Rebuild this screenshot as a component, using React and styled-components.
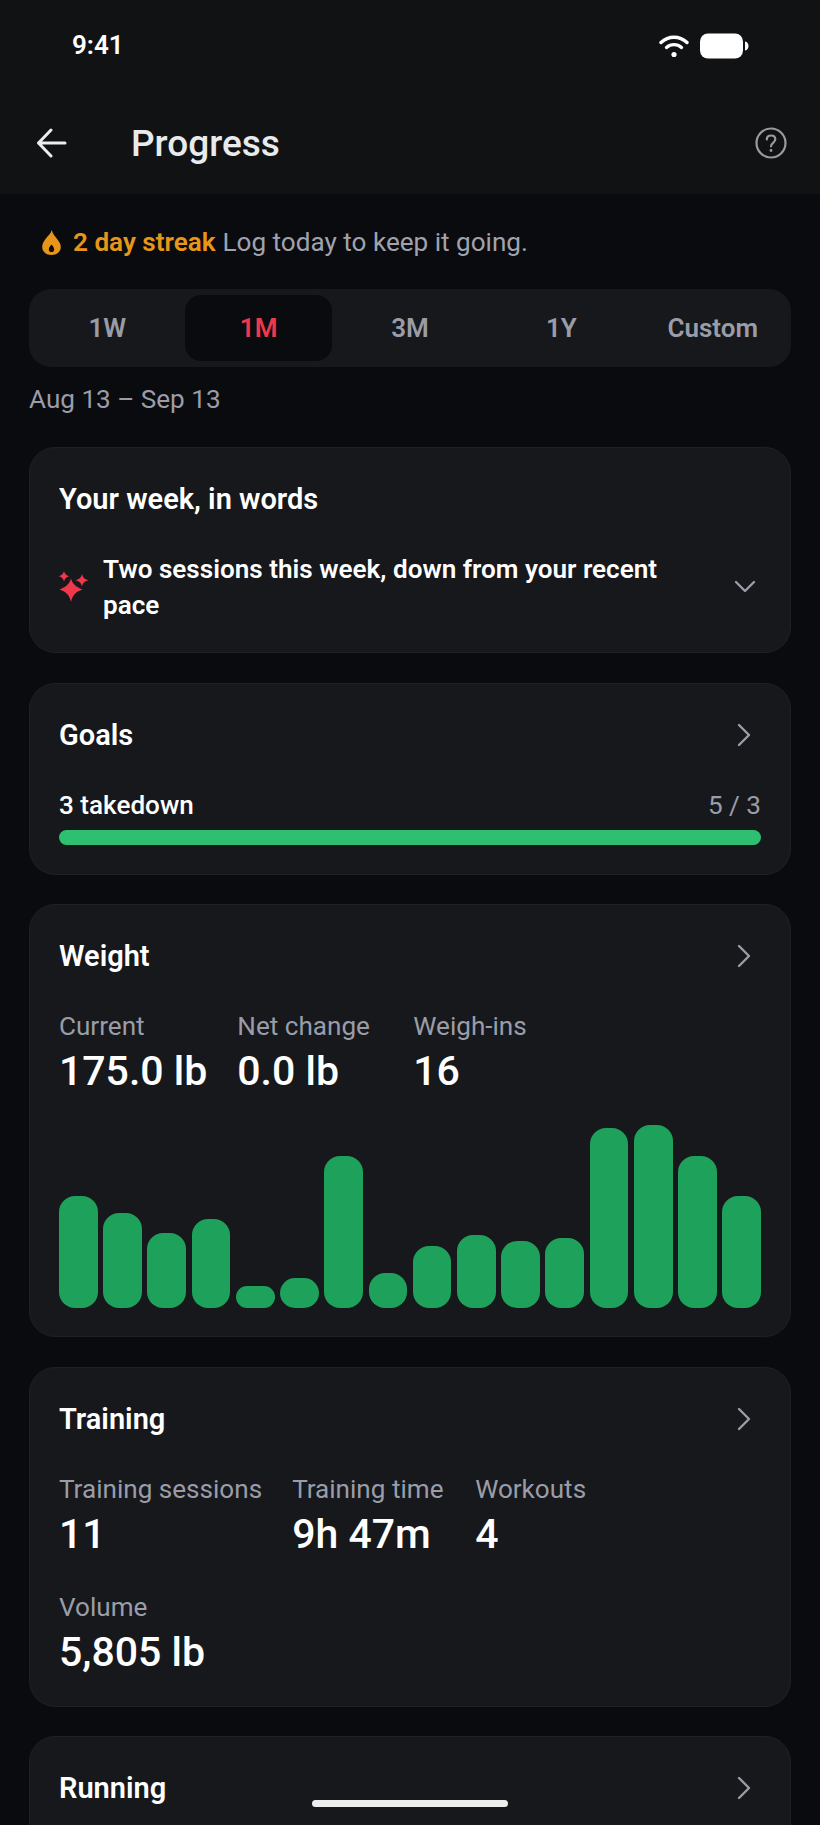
import React from "react";
import styled, { createGlobalStyle } from "styled-components";

const Global = createGlobalStyle`
  html, body { margin: 0; padding: 0; background: #0a0b0f; }
  body { font-family: Roboto, "Liberation Sans", sans-serif; -webkit-font-smoothing: antialiased; }
  * { box-sizing: border-box; }
`;

const Screen = styled.div`
  position: relative;
  width: 820px;
  height: 1825px;
  overflow: hidden;
  background: #0a0b0f;
`;
const Header = styled.header`
  height: 194px;
  background: #111214;
  display: flex;
  flex-direction: column;
`;
const StatusBar = styled.div`
  height: 90px;
  padding: 30px 71px 0 72px;
  display: flex;
  justify-content: space-between;
  align-items: flex-start;
`;
const Time = styled.span`
  font-size: 26px;
  line-height: 30px;
  font-weight: 600;
  color: #fff;
`;
const StatusIcons = styled.div`
  display: flex;
  align-items: center;
  gap: 11px;
  margin-top: 3px;
`;
const TopBar = styled.div`
  height: 60px;
  margin-top: 23px;
  padding: 0 33px 0 36px;
  display: flex;
  align-items: center;
`;
const Title = styled.h1`
  margin: 2px 0 0 64px;
  flex: 1;
  font-size: 37px;
  line-height: 44px;
  font-weight: 500;
  color: #e9eaec;
`;
const Content = styled.main`
  padding: 33px 29px 0;
`;
const Streak = styled.div`
  display: flex;
  align-items: center;
  height: 30px;
  padding-left: 13px;
  font-size: 26.1px;
  color: #a0a3ae;
`;
const StreakStrong = styled.strong`
  margin: 0 7px 0 12px;
  font-weight: 600;
  color: #e8961a;
`;
const Segments = styled.div`
  margin-top: 32px;
  height: 78px;
  padding: 6px 5px;
  display: grid;
  grid-template-columns: repeat(5, 1fr);
  gap: 4.8px;
  border-radius: 22px;
  background: #16181c;
`;
const Segment = styled.div`
  display: flex;
  align-items: center;
  justify-content: center;
  border-radius: 16px;
  font-size: 26px;
  font-weight: 600;
  color: ${(p) => (p.$active ? "#f0384c" : "#9a9da8")};
  background: ${(p) => (p.$active ? "#0a0b0f" : "transparent")};
`;
const DateRange = styled.div`
  margin: 17px 0 33px;
  font-size: 26.1px;
  line-height: 30px;
  color: #9a9da8;
`;
const Cards = styled.div`
  display: flex;
  flex-direction: column;
  gap: 29.5px;
`;
const Card = styled.section`
  padding: 34px 29px ${(p) => p.$bottom || 29}px;
  border: 1px solid #1e2025;
  border-radius: 26px;
  background: #16181c;
`;
const CardHead = styled.div`
  display: flex;
  align-items: center;
  justify-content: space-between;
  padding-right: 10px;
`;
const CardTitle = styled.h2`
  margin: 0;
  font-size: 29px;
  line-height: 34px;
  font-weight: 600;
  color: #fff;
`;
const Insight = styled.div`
  margin-top: 35px;
  display: flex;
  align-items: center;
  gap: 14px;
  padding-right: 5px;
`;
const InsightText = styled.p`
  margin: 0;
  max-width: 600px;
  flex: 1;
  font-size: 26.1px;
  line-height: 36px;
  font-weight: 600;
  color: #fff;
`;
const InsightToggle = styled.span`
  display: flex;
  margin-left: auto;
  margin-bottom: 2px;
`;
const GoalRow = styled.div`
  margin-top: 38px;
  display: flex;
  justify-content: space-between;
  font-size: 26.1px;
  line-height: 30px;
  font-weight: 500;
  color: #fff;
`;
const GoalCount = styled.span`
  font-weight: 400;
  color: #9a9da8;
`;
const Progress = styled.div`
  margin-top: 10px;
  height: 15px;
  border-radius: 8px;
  background: #2fbf71;
`;
const Stats = styled.div`
  margin-top: 38px;
  display: flex;
  flex-wrap: wrap;
  gap: 36px 30px;
  max-width: ${(p) => p.$max || "none"};
`;
const Stat = styled.div`
  display: flex;
  flex-direction: column;
  gap: 8px;
  min-width: ${(p) => p.$min || 0};
`;
const StatLabel = styled.span`
  font-size: 26.1px;
  line-height: 30px;
  color: #9a9da8;
`;
const StatValue = styled.span`
  font-size: 41px;
  line-height: 44px;
  font-weight: 500;
  color: #fff;
`;
const Chart = styled.div`
  margin-top: 32px;
  height: 183px;
  display: grid;
  grid-template-columns: repeat(16, 1fr);
  gap: 5.6px;
  align-items: end;
`;
const Bar = styled.div`
  border-radius: 16px;
  background: #1ea15b;
`;
const HomeIndicator = styled.div`
  position: absolute;
  left: 312px;
  bottom: 18px;
  width: 196px;
  height: 7px;
  border-radius: 4px;
  background: #eceded;
`;

const Chevron = () => (
  <svg width="14" height="24" viewBox="0 0 14 24" fill="none" stroke="#9a9da8" strokeWidth="2.4" strokeLinecap="round" strokeLinejoin="round">
    <path d="M2 2l10 10L2 22" />
  </svg>
);

const heights = [112, 95, 75, 89, 22, 30, 152, 35, 62, 73, 67, 70, 180, 183, 152, 112];

export default function App() {
  return (
    <Screen>
      <Global />
      <Header>
        <StatusBar>
          <Time>9:41</Time>
          <StatusIcons>
            <svg width="30" height="24" viewBox="0 0 30 24" fill="none" stroke="#fff" strokeWidth="3.4" strokeLinecap="round">
              <path d="M2 8.500C9.500 1.500 20.500 1.500 28 8.500" />
              <path d="M7.500 13.500c4.400-3.800 10.600-3.800 15 0" />
              <circle cx="15" cy="20.500" r="2.600" fill="#fff" stroke="none" />
            </svg>
            <svg width="49" height="26" viewBox="0 0 49 26">
              <rect x="0" y="0.500" width="43" height="25" rx="8" fill="#fff" />
              <path d="M45 8.500c2.400.4 3.500 2.200 3.500 4.500s-1.100 4.100-3.500 4.500z" fill="#fff" />
            </svg>
          </StatusIcons>
        </StatusBar>
        <TopBar>
          <svg width="31" height="30" viewBox="0 0 31 30" fill="none" stroke="#eceded" strokeWidth="3" strokeLinecap="round" strokeLinejoin="round">
            <path d="M29 15H3M15 2L2.500 15L15 28" />
          </svg>
          <Title>Progress</Title>
          <svg width="32" height="32" viewBox="0 0 32 32" fill="none" stroke="#9a9b9f" strokeWidth="2.2" strokeLinecap="round">
            <circle cx="16" cy="16" r="14.500" />
            <path d="M11.800 12.500c0-2.500 1.900-4 4.300-4s4.200 1.500 4.200 3.800c0 3.500-4.300 3.500-4.300 7" />
            <circle cx="16" cy="23.500" r="1.400" fill="#9a9b9f" stroke="none" />
          </svg>
        </TopBar>
      </Header>
      <Content>
        <Streak>
          <svg width="19" height="25" viewBox="0 0 19 25">
            <path d="M9.800 0c.6 3.800 3 6 5.300 9 2 2.600 3.700 5 3.700 8 0 4.700-4 8-9.300 8S.2 21.700.2 17c0-3 1.400-5.400 3.300-8C5.700 6 9 3.800 9.800 0z" fill="#e8961a" />
            <path d="M9.500 14.500c1.500 1.900 2.700 3.200 2.700 4.900 0 1.600-1.200 2.600-2.700 2.600s-2.700-1-2.700-2.600c0-1.700 1.200-3 2.700-4.900z" fill="#0a0b0f" />
          </svg>
          <StreakStrong>2 day streak</StreakStrong>
          Log today to keep it going.
        </Streak>
        <Segments>
          <Segment>1W</Segment>
          <Segment $active>1M</Segment>
          <Segment>3M</Segment>
          <Segment>1Y</Segment>
          <Segment>Custom</Segment>
        </Segments>
        <DateRange>Aug 13 – Sep 13</DateRange>
        <Cards>
          <Card $bottom={29}>
            <CardTitle>Your week, in words</CardTitle>
            <Insight>
              <svg width="30" height="32" viewBox="0 0 30 32" fill="#f0384c">
                <path d="M12 7.500C13.300 12.500 16.500 15.800 23.500 18.500 16.500 21 13.300 24.500 12 31 10.700 24.500 7.500 21 .5 18.500 7.500 15.800 10.700 12.500 12 7.500z" />
                <path d="M5 0C5.800 3 7 4.200 10.200 5.200 7 6.200 5.800 7.500 5 10.500 4.200 7.500 3 6.200-.2 5.200 3 4.200 4.200 3 5 0z" />
                <path d="M23 3c.9 3.500 2.300 5 6.500 6.200-4.200 1.200-5.600 2.700-6.500 6.300-.9-3.600-2.300-5.100-6.500-6.300 4.200-1.200 5.600-2.700 6.500-6.200z" />
              </svg>
              <InsightText>Two sessions this week, down from your recent pace</InsightText>
              <InsightToggle>
                <svg width="22" height="13" viewBox="0 0 22 13" fill="none" stroke="#9a9da8" strokeWidth="2.400" strokeLinecap="round" strokeLinejoin="round">
                  <path d="M2 2l9 9 9-9" />
                </svg>
              </InsightToggle>
            </Insight>
          </Card>
          <Card>
            <CardHead>
              <CardTitle>Goals</CardTitle>
              <Chevron />
            </CardHead>
            <GoalRow>
              <span>3 takedown</span>
              <GoalCount>5 / 3</GoalCount>
            </GoalRow>
            <Progress />
          </Card>
          <Card $bottom={28}>
            <CardHead>
              <CardTitle>Weight</CardTitle>
              <Chevron />
            </CardHead>
            <Stats>
              <Stat><StatLabel>Current</StatLabel><StatValue>175.0 lb</StatValue></Stat>
              <Stat $min="146px"><StatLabel>Net change</StatLabel><StatValue>0.0 lb</StatValue></Stat>
              <Stat><StatLabel>Weigh-ins</StatLabel><StatValue>16</StatValue></Stat>
            </Stats>
            <Chart>
              {heights.map((h, i) => (
                <Bar key={i} style={{ height: h }} />
              ))}
            </Chart>
          </Card>
          <Card $bottom={32}>
            <CardHead>
              <CardTitle>Training</CardTitle>
              <Chevron />
            </CardHead>
            <Stats $max="560px">
              <Stat><StatLabel>Training sessions</StatLabel><StatValue>11</StatValue></Stat>
              <Stat $min="153px"><StatLabel>Training time</StatLabel><StatValue>9h 47m</StatValue></Stat>
              <Stat><StatLabel>Workouts</StatLabel><StatValue>4</StatValue></Stat>
              <Stat><StatLabel>Volume</StatLabel><StatValue>5,805 lb</StatValue></Stat>
            </Stats>
          </Card>
          <Card $bottom={200}>
            <CardHead>
              <CardTitle>Running</CardTitle>
              <Chevron />
            </CardHead>
          </Card>
        </Cards>
      </Content>
      <HomeIndicator />
    </Screen>
  );
}
